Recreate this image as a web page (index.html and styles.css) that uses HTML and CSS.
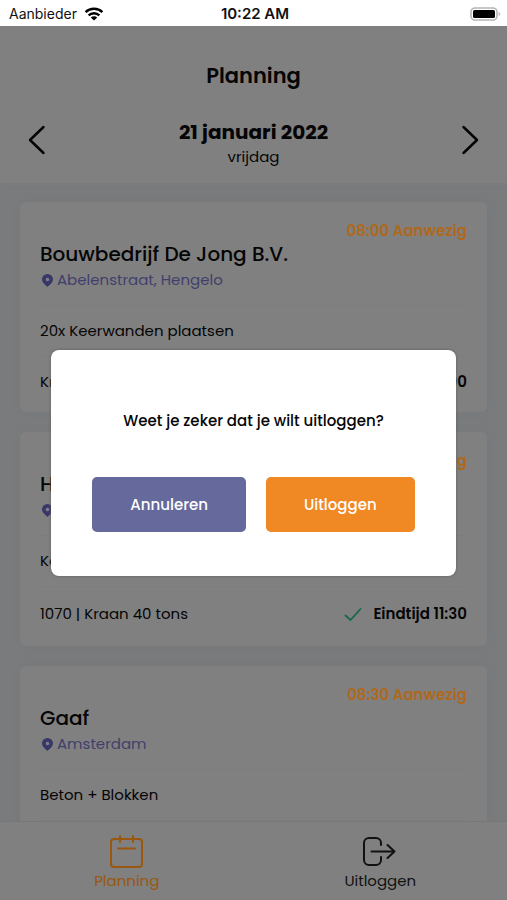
FILE: index.html
```html
<!DOCTYPE html>
<html lang="nl">
<head>
<meta charset="utf-8">
<meta name="viewport" content="width=device-width, initial-scale=1">
<title>Planning</title>
<link rel="stylesheet" href="styles.css">
</head>
<body>
<div class="status">
  <span class="status-carrier">Aanbieder
    <svg width="20" height="14" viewBox="0 0 20 14" aria-hidden="true"><g fill="none" stroke="#000" stroke-width="2.4"><path d="M1.6 5.2a12 12 0 0 1 16.8 0"/><path d="M4.6 8.4a7.8 7.8 0 0 1 10.8 0"/></g><path d="M10 13.6 6.8 10.6a4.6 4.6 0 0 1 6.4 0z"/></svg>
  </span>
  <span class="status-time">10:22 AM</span>
  <svg class="status-battery" width="31" height="14" viewBox="0 0 31 14" aria-hidden="true"><rect x="1" y="1" width="26" height="12" rx="4" fill="#fff" stroke="#b5b5b5" stroke-width="1.6"/><rect x="3" y="3" width="22" height="8" rx="1.5"/><path d="M28.6 5c2 .6 2 3.400 0 4z" fill="#b5b5b5"/></svg>
</div>
<div class="app">
  <header class="header">
    <h1 class="title">Planning</h1>
    <div class="date-bar">
      <button class="arrow" type="button" aria-label="Vorige dag"><svg width="18" height="30" viewBox="0 0 18 30"><path d="M15.500 2 2 15 15.500 28"/></svg></button>
      <div class="date"><strong>21 januari 2022</strong><span>vrijdag</span></div>
      <button class="arrow" type="button" aria-label="Volgende dag"><svg width="18" height="30" viewBox="0 0 18 30"><path d="M2.500 2 16 15 2.500 28"/></svg></button>
    </div>
  </header>
  <main class="list">
    <article class="card">
      <p class="time">08:00 Aanwezig</p>
      <h2 class="name">Bouwbedrijf De Jong B.V.</h2>
      <p class="place"><svg width="11" height="13" viewBox="0 0 11 13" aria-hidden="true"><path fill-rule="evenodd" d="M5.500 0A5.500 5.500 0 0 0 0 5.500C0 8.500 3 10.500 5.500 13 8 10.500 11 8.500 11 5.500A5.500 5.500 0 0 0 5.500 0zm0 3.700a1.800 1.800 0 1 1 0 3.600 1.800 1.800 0 0 1 0-3.600z"/></svg>Abelenstraat, Hengelo</p>
      <p class="task">20x Keerwanden plaatsen</p>
      <div class="row"><span>Kraan</span><strong>Eindtijd 10:00</strong></div>
    </article>
    <article class="card">
      <p class="time">08:00 Aanwezig</p>
      <h2 class="name">H</h2>
      <p class="place"><svg width="11" height="13" viewBox="0 0 11 13" aria-hidden="true"><path fill-rule="evenodd" d="M5.500 0A5.500 5.500 0 0 0 0 5.500C0 8.500 3 10.500 5.500 13 8 10.500 11 8.500 11 5.500A5.500 5.500 0 0 0 5.500 0zm0 3.700a1.800 1.800 0 1 1 0 3.600 1.800 1.800 0 0 1 0-3.600z"/></svg></p>
      <p class="task">Ke</p>
      <div class="row"><span>1070 | Kraan 40 tons</span><svg class="check" width="24" height="24" viewBox="0 0 24 24" aria-label="Afgerond"><path d="m4.500 13.500 5 4.500L19.500 7"/></svg><strong>Eindtijd 11:30</strong></div>
    </article>
    <article class="card">
      <p class="time">08:30 Aanwezig</p>
      <h2 class="name">Gaaf</h2>
      <p class="place"><svg width="11" height="13" viewBox="0 0 11 13" aria-hidden="true"><path fill-rule="evenodd" d="M5.500 0A5.500 5.500 0 0 0 0 5.500C0 8.500 3 10.500 5.500 13 8 10.500 11 8.500 11 5.500A5.500 5.500 0 0 0 5.500 0zm0 3.700a1.800 1.800 0 1 1 0 3.600 1.800 1.800 0 0 1 0-3.600z"/></svg>Amsterdam</p>
      <p class="task">Beton + Blokken</p>
    </article>
  </main>
  <nav class="tabs">
    <a class="tab tab-active" href="#planning"><svg width="34" height="34" viewBox="0 0 34 34" aria-hidden="true"><rect x="1" y="4" width="31" height="28" rx="3"/><path d="M10 1v6M23 1v6M8 13.500h17"/></svg>Planning</a>
    <a class="tab" href="#uitloggen"><svg width="34" height="34" viewBox="0 0 34 34" aria-hidden="true"><path d="M18 10V8a5 5 0 0 0-5-5H6a5 5 0 0 0-5 5v17a5 5 0 0 0 5 5h7a5 5 0 0 0 5-5v-3M8.500 16.500h23M24.500 10l7 6.500-7 6.500"/></svg>Uitloggen</a>
  </nav>
  <div class="overlay">
    <div class="modal" role="dialog" aria-modal="true" aria-labelledby="question">
      <p class="question" id="question">Weet je zeker dat je wilt uitloggen?</p>
      <div class="actions">
        <button class="button button-cancel" type="button">Annuleren</button>
        <button class="button button-confirm" type="button">Uitloggen</button>
      </div>
    </div>
  </div>
</div>
</body>
</html>
```
FILE: styles.css
```css
* { box-sizing: border-box; }
body {
  margin: 0;
  height: 100vh;
  display: flex;
  flex-direction: column;
  background: #fff;
  color: #050505;
  font: 15px/20px Poppins, Inter, "Open Sans", sans-serif;
}
h1, h2, p { margin: 0; }
button { border: 0; padding: 0; font: inherit; color: inherit; background: none; }

.status {
  display: grid;
  grid-template-columns: 1fr auto 1fr;
  align-items: center;
  height: 26px;
  padding: 1px 6px 0 9px;
  font: 14px/20px Inter, sans-serif;
  color: #111;
}
.status-carrier { display: flex; align-items: center; gap: 7px; }
.status-time { font-size: 15px; font-weight: 600; }
.status-battery { justify-self: end; }

.app {
  position: relative;
  flex: 1;
  min-height: 0;
  display: flex;
  flex-direction: column;
  background: #797b7d;
  overflow: hidden;
}
.header { padding: 36px 28px 15px; background: #808080; box-shadow: 0 0 4px #7c7e7f; }
.title { font-size: 21px; line-height: 28px; font-weight: 600; text-align: center; }
.date-bar { display: flex; align-items: center; justify-content: space-between; margin-top: 28px; }
.date { display: flex; flex-direction: column; align-items: center; line-height: 22px; }
.date strong { font-size: 20px; line-height: 28px; font-weight: 700; }
.arrow { margin-top: -6px; }
.arrow svg { display: block; fill: none; stroke: #050505; stroke-width: 2.500; stroke-linecap: round; stroke-linejoin: round; }

.list {
  flex: 1;
  min-height: 0;
  overflow: hidden;
  display: flex;
  flex-direction: column;
  gap: 20px;
  padding: 19px 20px 0;
}
.card {
  flex: none;
  padding: 19px 20px 20px;
  border-radius: 6px;
  background: #808080;
  box-shadow: 0 0 8px #777a7b;
}
.time { color: #ae691c; font-weight: 600; text-align: right; }
.name { font-size: 20px; line-height: 26px; font-weight: 500; }
.place { display: flex; align-items: center; gap: 4px; height: 26px; padding-left: 2px; color: #403f6c; }
.place svg { fill: #38376a; }
.task { margin-top: 12px; padding: 15px 0; border-top: 1px solid #7c7d7d; border-bottom: 1px solid #7c7d7d; }
.row { display: flex; align-items: center; padding-top: 15px; }
.row span { flex: 1; }
.row strong { font-weight: 600; }
.check { margin-right: 8px; fill: none; stroke: #176848; stroke-width: 1.800; stroke-linecap: round; }

.tabs { display: flex; height: 79px; background: #808080; border-top: 1px solid #767878; }
.tab { flex: 1; display: flex; flex-direction: column; align-items: center; gap: 2px; padding-top: 13px; color: #111; text-decoration: none; }
.tab svg { fill: none; stroke: currentColor; stroke-width: 2; stroke-linecap: round; stroke-linejoin: round; }
.tab-active { color: #99570f; }

.overlay { position: absolute; inset: 0; display: flex; align-items: center; justify-content: center; }
.modal { width: 80%; padding: 59px 20px 44px; border-radius: 8px; background: #fff; box-shadow: 0 0 3px #5c5c5c; text-align: center; }
.question { line-height: 24px; font-weight: 500; }
.actions { display: flex; justify-content: center; gap: 20px; margin-top: 44px; }
.button { height: 55px; padding: 0 38px; border-radius: 5px; color: #fff; font-weight: 500; }
.button-cancel { background: #66699b; }
.button-confirm { background: #f08824; }
```
